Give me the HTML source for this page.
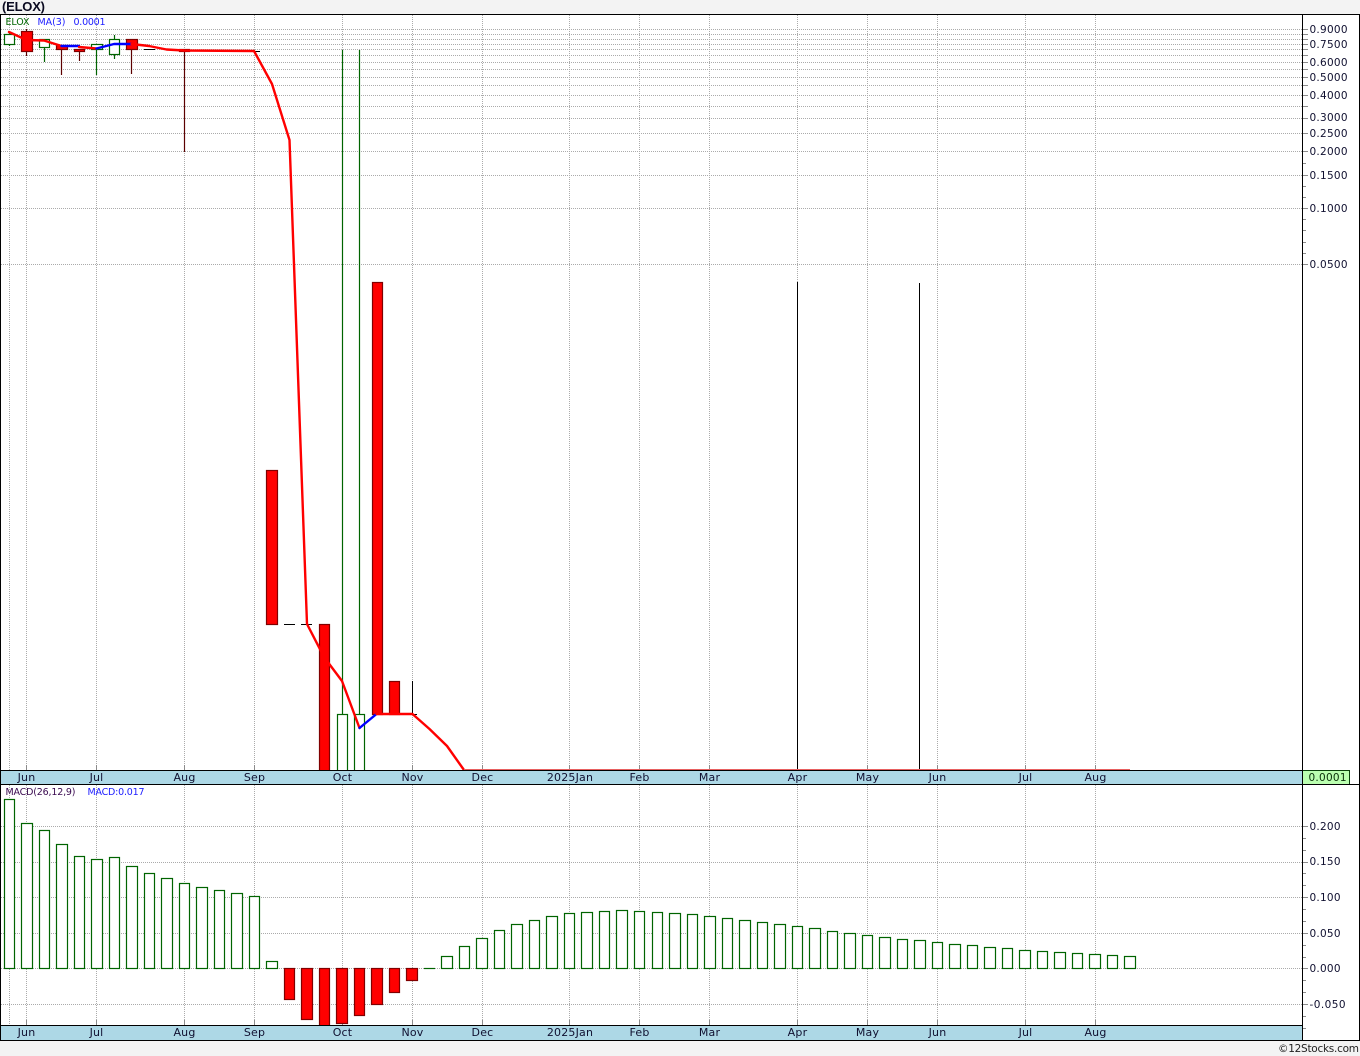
<!DOCTYPE html>
<html lang="en">
<head>
<meta charset="utf-8">
<title>ELOX</title>
<style>
html,body{margin:0;padding:0;background:#f3f3f3;width:1360px;height:1056px;overflow:hidden}
svg{display:block;position:absolute;left:0;top:0}
text{font-family:"DejaVu Sans","Liberation Sans",sans-serif;font-size:10.5px;fill:#101030}
.c{shape-rendering:crispEdges}
.g line{stroke:#ababab;stroke-width:1;stroke-dasharray:1 1;shape-rendering:crispEdges}
.t line{stroke:#8c8c8c;stroke-width:1;shape-rendering:crispEdges}
.up rect{fill:#fff;stroke:#006400;stroke-width:1.2}
.dn rect{fill:#f00;stroke:#800000;stroke-width:1.2}
.wg line{stroke:#006400;stroke-width:1.2}
.wr line{stroke:#5c0000;stroke-width:1.2}
.wk line{stroke:#000;stroke-width:1;shape-rendering:crispEdges}
.lab text{text-anchor:middle;font-size:11px;letter-spacing:.2px}
</style>
</head>
<body>
<svg width="1360" height="1056" viewBox="0 0 1360 1056" xmlns="http://www.w3.org/2000/svg">
<rect x="0" y="0" width="1360" height="1056" fill="#f3f3f3"/>
<rect x="0" y="14" width="1360" height="1026" fill="#fff"/>

<text x="2" y="11" textLength="43" style="font-family:'Liberation Sans',sans-serif;font-weight:bold;font-size:13px;fill:#0a0a20">(ELOX)</text>

<!-- horizontal grid: price -->
<g class="g">
<line x1="1" x2="1302" y1="29.5" y2="29.5"/><line x1="1" x2="1302" y1="34.5" y2="34.5"/><line x1="1" x2="1302" y1="39.5" y2="39.5"/><line x1="1" x2="1302" y1="44.5" y2="44.5"/><line x1="1" x2="1302" y1="49.5" y2="49.5"/><line x1="1" x2="1302" y1="55.5" y2="55.5"/><line x1="1" x2="1302" y1="62.5" y2="62.5"/><line x1="1" x2="1302" y1="69.5" y2="69.5"/><line x1="1" x2="1302" y1="77.5" y2="77.5"/><line x1="1" x2="1302" y1="85.5" y2="85.5"/><line x1="1" x2="1302" y1="95.5" y2="95.5"/><line x1="1" x2="1302" y1="106.5" y2="106.5"/><line x1="1" x2="1302" y1="118.5" y2="118.5"/><line x1="1" x2="1302" y1="133.5" y2="133.5"/><line x1="1" x2="1302" y1="151.5" y2="151.5"/><line x1="1" x2="1302" y1="175.5" y2="175.5"/><line x1="1" x2="1302" y1="208.5" y2="208.5"/><line x1="1" x2="1302" y1="264.5" y2="264.5"/>
<!-- horizontal grid: macd -->
<line x1="1" x2="1302" y1="826.5" y2="826.5"/><line x1="1" x2="1302" y1="862.5" y2="862.5"/><line x1="1" x2="1302" y1="897.5" y2="897.5"/><line x1="1" x2="1302" y1="933.5" y2="933.5"/><line x1="1" x2="1302" y1="968.5" y2="968.5"/><line x1="1" x2="1302" y1="1004.5" y2="1004.5"/>
<!-- vertical grid -->
<line x1="9.5" x2="9.5" y1="15" y2="770"/><line x1="26.5" x2="26.5" y1="15" y2="770"/><line x1="96.5" x2="96.5" y1="15" y2="770"/><line x1="184.5" x2="184.5" y1="15" y2="770"/><line x1="254.5" x2="254.5" y1="15" y2="770"/><line x1="342.5" x2="342.5" y1="15" y2="770"/><line x1="412.5" x2="412.5" y1="15" y2="770"/><line x1="482.5" x2="482.5" y1="15" y2="770"/><line x1="569.5" x2="569.5" y1="15" y2="770"/><line x1="639.5" x2="639.5" y1="15" y2="770"/><line x1="709.5" x2="709.5" y1="15" y2="770"/><line x1="797.5" x2="797.5" y1="15" y2="770"/><line x1="867.5" x2="867.5" y1="15" y2="770"/><line x1="937.5" x2="937.5" y1="15" y2="770"/><line x1="1025.5" x2="1025.5" y1="15" y2="770"/><line x1="1095.5" x2="1095.5" y1="15" y2="770"/>
<line x1="9.5" x2="9.5" y1="785" y2="1025"/><line x1="26.5" x2="26.5" y1="785" y2="1025"/><line x1="96.5" x2="96.5" y1="785" y2="1025"/><line x1="184.5" x2="184.5" y1="785" y2="1025"/><line x1="254.5" x2="254.5" y1="785" y2="1025"/><line x1="342.5" x2="342.5" y1="785" y2="1025"/><line x1="412.5" x2="412.5" y1="785" y2="1025"/><line x1="482.5" x2="482.5" y1="785" y2="1025"/><line x1="569.5" x2="569.5" y1="785" y2="1025"/><line x1="639.5" x2="639.5" y1="785" y2="1025"/><line x1="709.5" x2="709.5" y1="785" y2="1025"/><line x1="797.5" x2="797.5" y1="785" y2="1025"/><line x1="867.5" x2="867.5" y1="785" y2="1025"/><line x1="937.5" x2="937.5" y1="785" y2="1025"/><line x1="1025.5" x2="1025.5" y1="785" y2="1025"/><line x1="1095.5" x2="1095.5" y1="785" y2="1025"/>
</g>

<!-- small solid ticks above date bands -->
<g class="t">
<line x1="254.5" x2="254.5" y1="765" y2="770"/><line x1="342.5" x2="342.5" y1="765" y2="770"/><line x1="412.5" x2="412.5" y1="765" y2="770"/><line x1="482.5" x2="482.5" y1="765" y2="770"/><line x1="569.5" x2="569.5" y1="765" y2="770"/><line x1="639.5" x2="639.5" y1="765" y2="770"/><line x1="709.5" x2="709.5" y1="765" y2="770"/><line x1="867.5" x2="867.5" y1="765" y2="770"/><line x1="937.5" x2="937.5" y1="765" y2="770"/><line x1="1025.5" x2="1025.5" y1="765" y2="770"/><line x1="1095.5" x2="1095.5" y1="765" y2="770"/><line x1="26.5" x2="26.5" y1="765" y2="770"/><line x1="96.5" x2="96.5" y1="765" y2="770"/><line x1="184.5" x2="184.5" y1="765" y2="770"/>
<line x1="254.5" x2="254.5" y1="1020" y2="1025"/><line x1="342.5" x2="342.5" y1="1020" y2="1025"/><line x1="412.5" x2="412.5" y1="1020" y2="1025"/><line x1="482.5" x2="482.5" y1="1020" y2="1025"/><line x1="569.5" x2="569.5" y1="1020" y2="1025"/><line x1="639.5" x2="639.5" y1="1020" y2="1025"/><line x1="709.5" x2="709.5" y1="1020" y2="1025"/><line x1="797.5" x2="797.5" y1="1020" y2="1025"/><line x1="867.5" x2="867.5" y1="1020" y2="1025"/><line x1="937.5" x2="937.5" y1="1020" y2="1025"/><line x1="1025.5" x2="1025.5" y1="1020" y2="1025"/><line x1="1095.5" x2="1095.5" y1="1020" y2="1025"/><line x1="26.5" x2="26.5" y1="1020" y2="1025"/><line x1="96.5" x2="96.5" y1="1020" y2="1025"/><line x1="184.5" x2="184.5" y1="1020" y2="1025"/>
<!-- right axis ticks -->
<line x1="1303" x2="1308" y1="29.5" y2="29.5"/><line x1="1303" x2="1308" y1="34.5" y2="34.5"/><line x1="1303" x2="1308" y1="39.5" y2="39.5"/><line x1="1303" x2="1308" y1="44.5" y2="44.5"/><line x1="1303" x2="1308" y1="49.5" y2="49.5"/><line x1="1303" x2="1308" y1="55.5" y2="55.5"/><line x1="1303" x2="1308" y1="62.5" y2="62.5"/><line x1="1303" x2="1308" y1="69.5" y2="69.5"/><line x1="1303" x2="1308" y1="77.5" y2="77.5"/><line x1="1303" x2="1308" y1="85.5" y2="85.5"/><line x1="1303" x2="1308" y1="95.5" y2="95.5"/><line x1="1303" x2="1308" y1="106.5" y2="106.5"/><line x1="1303" x2="1308" y1="118.5" y2="118.5"/><line x1="1303" x2="1308" y1="133.5" y2="133.5"/><line x1="1303" x2="1308" y1="151.5" y2="151.5"/><line x1="1303" x2="1306" y1="163.5" y2="163.5"/><line x1="1303" x2="1308" y1="175.5" y2="175.5"/><line x1="1303" x2="1306" y1="186.5" y2="186.5"/><line x1="1303" x2="1306" y1="197.5" y2="197.5"/><line x1="1303" x2="1308" y1="208.5" y2="208.5"/><line x1="1303" x2="1306" y1="219.5" y2="219.5"/><line x1="1303" x2="1306" y1="230.5" y2="230.5"/><line x1="1303" x2="1306" y1="242.5" y2="242.5"/><line x1="1303" x2="1306" y1="253.5" y2="253.5"/><line x1="1303" x2="1308" y1="264.5" y2="264.5"/>
<line x1="1303" x2="1308" y1="826.5" y2="826.5"/><line x1="1303" x2="1306" y1="838.5" y2="838.5"/><line x1="1303" x2="1306" y1="850.5" y2="850.5"/><line x1="1303" x2="1308" y1="862.5" y2="862.5"/><line x1="1303" x2="1306" y1="873.5" y2="873.5"/><line x1="1303" x2="1306" y1="885.5" y2="885.5"/><line x1="1303" x2="1308" y1="897.5" y2="897.5"/><line x1="1303" x2="1306" y1="909.5" y2="909.5"/><line x1="1303" x2="1306" y1="921.5" y2="921.5"/><line x1="1303" x2="1308" y1="933.5" y2="933.5"/><line x1="1303" x2="1306" y1="945.5" y2="945.5"/><line x1="1303" x2="1306" y1="957.5" y2="957.5"/><line x1="1303" x2="1308" y1="968.5" y2="968.5"/><line x1="1303" x2="1306" y1="980.5" y2="980.5"/><line x1="1303" x2="1306" y1="992.5" y2="992.5"/><line x1="1303" x2="1308" y1="1004.5" y2="1004.5"/><line x1="1303" x2="1306" y1="1016.5" y2="1016.5"/><line x1="1303" x2="1306" y1="1028.5" y2="1028.5"/>
</g>

<!-- price wicks -->
<g class="wg">
<line x1="9.5" x2="9.5" y1="32" y2="46"/>
<line x1="44.5" x2="44.5" y1="39" y2="62"/>
<line x1="96.5" x2="96.5" y1="44" y2="75"/>
<line x1="114.5" x2="114.5" y1="35" y2="59"/>
<line x1="342.5" x2="342.5" y1="50" y2="770"/>
<line x1="359.5" x2="359.5" y1="50" y2="770"/>
</g>
<g class="wr">
<line x1="26.5" x2="26.5" y1="29" y2="56"/>
<line x1="61.5" x2="61.5" y1="45" y2="75"/>
<line x1="79.5" x2="79.5" y1="49" y2="61"/>
<line x1="131.5" x2="131.5" y1="39" y2="74"/>
<line x1="184.5" x2="184.5" y1="49" y2="152"/>
</g>
<g class="wk">
<line x1="144" x2="155" y1="49.5" y2="49.5"/>
<line x1="249" x2="260" y1="51.5" y2="51.5"/>
<line x1="284" x2="295" y1="624.5" y2="624.5"/>
<line x1="301" x2="312" y1="624.5" y2="624.5"/>
<line x1="412.5" x2="412.5" y1="681" y2="714"/>
<line x1="406" x2="417" y1="714.5" y2="714.5"/>
<line x1="797.5" x2="797.5" y1="282" y2="770"/>
<line x1="919.5" x2="919.5" y1="283" y2="770"/>
</g>

<!-- price candles -->
<g class="up">
<rect x="4.5" y="34.5" width="10" height="10"/>
<rect x="39.5" y="39.5" width="10" height="8"/>
<rect x="91.5" y="44.5" width="11" height="5"/>
<rect x="109.5" y="39.5" width="10" height="15"/>
<rect x="337.5" y="714.5" width="10" height="60"/>
<rect x="354.5" y="714.5" width="10" height="60"/>
</g>
<g class="dn">
<rect x="21.5" y="31.5" width="11" height="20"/>
<rect x="56.5" y="45.5" width="11" height="4"/>
<rect x="74.5" y="49.5" width="10" height="2"/>
<rect x="126.5" y="39.5" width="11" height="10"/>
<rect x="179.5" y="49.5" width="10" height="2"/>
<rect x="266.5" y="470.5" width="11" height="154"/>
<rect x="319.5" y="624.5" width="10" height="150"/>
<rect x="372.5" y="282.5" width="10" height="432"/>
<rect x="389.5" y="681.5" width="10" height="33"/>
</g>

<!-- moving average -->
<g fill="none" stroke-width="2.4" stroke-linejoin="round" stroke-linecap="round">
<path stroke="#f00" d="M9 32L26.5 40L44 40.5L61.5 46"/>
<path stroke="#00f" d="M61.5 46L79 46"/>
<path stroke="#f00" d="M79 47L96.5 48.5"/>
<path stroke="#00f" d="M96.5 48.5L114 44L131.5 44"/>
<path stroke="#f00" d="M131.5 44L149 46L166.500 49.500L184 50.500L254 51L272 84L289.500 140L307 624L324 657L342 681L359.500 728"/>
<path stroke="#00f" d="M359.500 728L376.500 714"/>
<path stroke="#f00" d="M376.500 714L412.500 714L429.500 729L447 746L464 770"/>
</g>
<line x1="464" x2="1130" y1="769.5" y2="769.5" stroke="#e86060" stroke-width="1" class="c"/>

<text x="5.500" y="25" textLength="24" style="font-size:9.500px;fill:#006400">ELOX</text>
<text x="37.500" y="25" textLength="28" style="font-size:9.500px;fill:#2020ff">MA(3)</text>
<text x="73.500" y="25" textLength="32" style="font-size:9.500px;fill:#2020ff">0.0001</text>

<!-- MACD histogram -->
<g class="up">
<rect x="4.500" y="799.500" width="10" height="169"/>
<rect x="21.500" y="823.500" width="11" height="145"/>
<rect x="39.500" y="830.500" width="10" height="138"/>
<rect x="56.500" y="844.500" width="11" height="124"/>
<rect x="74.500" y="856.500" width="10" height="112"/>
<rect x="91.500" y="859.500" width="11" height="109"/>
<rect x="109.500" y="857.500" width="10" height="111"/>
<rect x="126.500" y="866.500" width="11" height="102"/>
<rect x="144.500" y="873.500" width="10" height="95"/>
<rect x="161.500" y="878.500" width="11" height="90"/>
<rect x="179.500" y="883.500" width="10" height="85"/>
<rect x="196.500" y="887.500" width="11" height="81"/>
<rect x="214.500" y="890.500" width="10" height="78"/>
<rect x="231.500" y="893.500" width="11" height="75"/>
<rect x="249.500" y="896.500" width="10" height="72"/>
<rect x="266.500" y="961.500" width="11" height="7"/>
<rect x="441.500" y="956.500" width="11" height="12"/>
<rect x="459.500" y="946.500" width="10" height="22"/>
<rect x="476.500" y="938.500" width="11" height="30"/>
<rect x="494.500" y="930.500" width="10" height="38"/>
<rect x="511.500" y="924.500" width="11" height="44"/>
<rect x="529.500" y="920.500" width="10" height="48"/>
<rect x="546.500" y="916.500" width="11" height="52"/>
<rect x="564.500" y="913.500" width="10" height="55"/>
<rect x="581.500" y="912.500" width="11" height="56"/>
<rect x="599.500" y="911.500" width="10" height="57"/>
<rect x="616.500" y="910.500" width="11" height="58"/>
<rect x="634.500" y="911.500" width="10" height="57"/>
<rect x="652.500" y="912.500" width="10" height="56"/>
<rect x="669.500" y="913.500" width="11" height="55"/>
<rect x="687.500" y="914.500" width="10" height="54"/>
<rect x="704.500" y="916.500" width="11" height="52"/>
<rect x="722.500" y="918.500" width="10" height="50"/>
<rect x="739.500" y="920.500" width="11" height="48"/>
<rect x="757.500" y="922.500" width="10" height="46"/>
<rect x="774.500" y="924.500" width="11" height="44"/>
<rect x="792.500" y="926.500" width="10" height="42"/>
<rect x="809.500" y="928.500" width="11" height="40"/>
<rect x="827.500" y="931.500" width="10" height="37"/>
<rect x="844.500" y="933.500" width="11" height="35"/>
<rect x="862.500" y="935.500" width="10" height="33"/>
<rect x="879.500" y="937.500" width="11" height="31"/>
<rect x="897.500" y="939.500" width="10" height="29"/>
<rect x="914.500" y="940.500" width="11" height="28"/>
<rect x="932.500" y="942.500" width="10" height="26"/>
<rect x="949.500" y="944.500" width="11" height="24"/>
<rect x="967.500" y="945.500" width="10" height="23"/>
<rect x="984.500" y="947.500" width="11" height="21"/>
<rect x="1002.500" y="948.500" width="10" height="20"/>
<rect x="1019.500" y="950.500" width="11" height="18"/>
<rect x="1037.500" y="951.500" width="10" height="17"/>
<rect x="1054.500" y="952.500" width="11" height="16"/>
<rect x="1072.500" y="953.500" width="10" height="15"/>
<rect x="1089.500" y="954.500" width="11" height="14"/>
<rect x="1107.500" y="955.500" width="10" height="13"/>
<rect x="1124.500" y="956.500" width="11" height="12"/>
</g>
<g class="wg"><line x1="424" x2="435" y1="968.500" y2="968.500"/></g>
<g class="dn">
<rect x="284.500" y="968.500" width="10" height="31"/>
<rect x="301.500" y="968.500" width="11" height="51"/>
<rect x="319.500" y="968.500" width="10" height="62"/>
<rect x="336.500" y="968.500" width="11" height="55"/>
<rect x="354.500" y="968.500" width="10" height="47"/>
<rect x="371.500" y="968.500" width="11" height="36"/>
<rect x="389.500" y="968.500" width="10" height="24"/>
<rect x="406.500" y="968.500" width="11" height="12"/>
</g>

<text x="5.500" y="795" textLength="70" style="font-size:9.500px;fill:#3a0a50">MACD(26,12,9)</text>
<text x="87.500" y="795" textLength="57" style="font-size:9.500px;fill:#2020ff">MACD:0.017</text>

<!-- date bands -->
<rect x="1" y="770" width="1302" height="14" fill="#add8e6" class="c"/>
<rect x="1" y="1025" width="1302" height="15" fill="#add8e6" class="c"/>
<rect x="1303" y="770" width="46" height="14" fill="#bbffb0" class="c"/>
<g class="c" stroke="#000" stroke-width="1">
<line x1="0" x2="1360" y1="14.500" y2="14.500"/>
<line x1="0" x2="1303" y1="770.500" y2="770.500"/>
<line x1="0" x2="1360" y1="784.500" y2="784.500"/>
<line x1="0" x2="1303" y1="1025.500" y2="1025.500"/>
<line x1="0" x2="1360" y1="1040.500" y2="1040.500"/>
<line x1="0.500" x2="0.500" y1="14" y2="1041"/>
<line x1="1302.500" x2="1302.500" y1="14" y2="1041"/>
<line x1="1359.500" x2="1359.500" y1="14" y2="1041"/>
</g>
<g class="c" stroke="#0a400a" stroke-width="1">
<line x1="1303" x2="1350" y1="770.500" y2="770.500"/>
<line x1="1349.500" x2="1349.500" y1="770" y2="784"/>
</g>

<g class="lab">
<text x="26.500" y="781">Jun</text><text x="96.500" y="781">Jul</text><text x="184.500" y="781">Aug</text><text x="254.500" y="781">Sep</text><text x="342.500" y="781">Oct</text><text x="412.500" y="781">Nov</text><text x="482.500" y="781">Dec</text><text x="570" y="781">2025Jan</text><text x="639.500" y="781">Feb</text><text x="709.500" y="781">Mar</text><text x="797.500" y="781">Apr</text><text x="867.500" y="781">May</text><text x="937.500" y="781">Jun</text><text x="1025.500" y="781">Jul</text><text x="1095.500" y="781">Aug</text>
<text x="26.500" y="1036">Jun</text><text x="96.500" y="1036">Jul</text><text x="184.500" y="1036">Aug</text><text x="254.500" y="1036">Sep</text><text x="342.500" y="1036">Oct</text><text x="412.500" y="1036">Nov</text><text x="482.500" y="1036">Dec</text><text x="570" y="1036">2025Jan</text><text x="639.500" y="1036">Feb</text><text x="709.500" y="1036">Mar</text><text x="797.500" y="1036">Apr</text><text x="867.500" y="1036">May</text><text x="937.500" y="1036">Jun</text><text x="1025.500" y="1036">Jul</text><text x="1095.500" y="1036">Aug</text>
</g>

<!-- price axis labels -->
<text x="1309.500" y="33" textLength="38">0.9000</text>
<text x="1309.500" y="48" textLength="38">0.7500</text>
<text x="1309.500" y="66" textLength="38">0.6000</text>
<text x="1309.500" y="81" textLength="38">0.5000</text>
<text x="1309.500" y="99" textLength="38">0.4000</text>
<text x="1309.500" y="121" textLength="38">0.3000</text>
<text x="1309.500" y="137" textLength="38">0.2500</text>
<text x="1309.500" y="155" textLength="38">0.2000</text>
<text x="1309.500" y="179" textLength="38">0.1500</text>
<text x="1309.500" y="212" textLength="38">0.1000</text>
<text x="1309.500" y="268" textLength="38">0.0500</text>
<text x="1308.500" y="781" textLength="38" style="fill:#0a300a">0.0001</text>

<!-- macd axis labels -->
<text x="1309.500" y="830" textLength="31">0.200</text>
<text x="1309.500" y="865" textLength="31">0.150</text>
<text x="1309.500" y="901" textLength="31">0.100</text>
<text x="1309.500" y="937" textLength="31">0.050</text>
<text x="1309.500" y="972" textLength="31">0.000</text>
<text x="1309.500" y="1008" textLength="36">-0.050</text>

<text x="1278" y="1052" textLength="81" style="fill:#222">©12Stocks.com</text>
</svg>
</body>
</html>
